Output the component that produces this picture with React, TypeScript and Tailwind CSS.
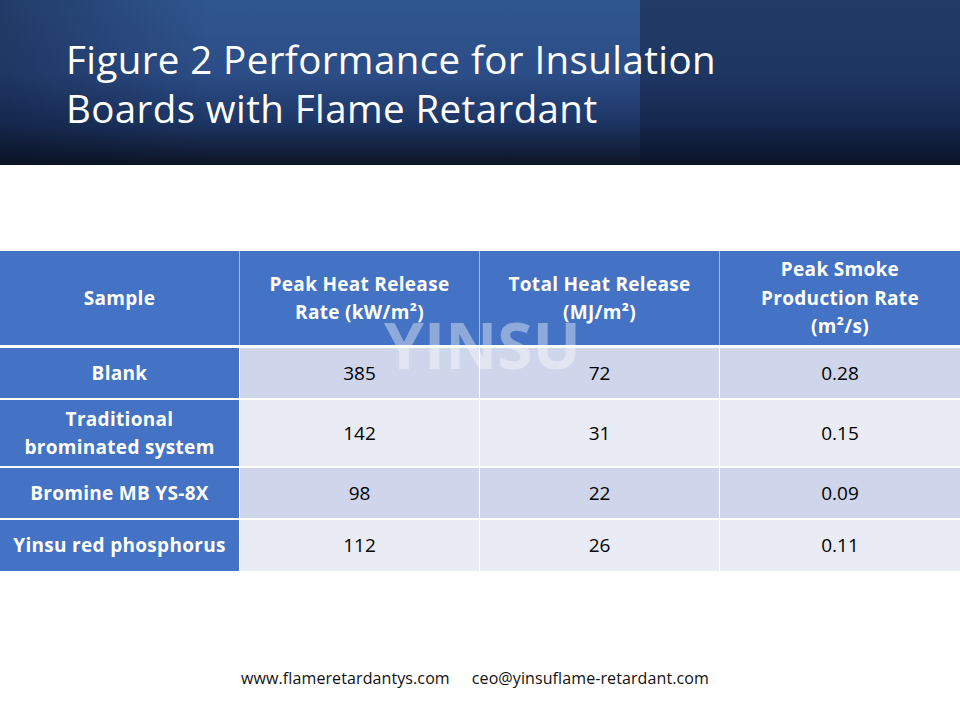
import React from "react";

const font = { fontFamily: "'Open Sans', Lato, 'Liberation Sans', sans-serif" };

type Row = { name: React.ReactNode; a: string; b: string; c: string; h: string; bg: string };

const rows: Row[] = [
  { name: "Blank", a: "385", b: "72", c: "0.28", h: "h-[50px]", bg: "bg-[#cfd5ea]" },
  { name: <>Traditional<br />brominated system</>, a: "142", b: "31", c: "0.15", h: "h-[66px]", bg: "bg-[#e9ebf5]" },
  { name: "Bromine MB YS-8X", a: "98", b: "22", c: "0.09", h: "h-[50px]", bg: "bg-[#cfd5ea]" },
  { name: "Yinsu red phosphorus", a: "112", b: "26", c: "0.11", h: "h-[51px]", bg: "bg-[#e9ebf5]" },
];

export default function App() {
  return (
    <div className="relative w-[960px] h-[720px] bg-white overflow-hidden" style={font}>
      <div className="h-[165px] bg-[linear-gradient(90deg,rgba(0,0,0,0)_640px,rgba(8,16,38,0.38)_640px),linear-gradient(90deg,rgba(5,12,30,0.35)_0%,rgba(0,0,0,0)_22%),linear-gradient(180deg,#30568f_0%,#2c4d87_45%,#1d3563_75%,#0c1527_100%)] pl-[66px] pt-[35px]">
        <h1 className="text-white text-[38.5px] leading-[49px] font-normal tracking-[0.4px]">
          Figure 2 Performance for Insulation
          <br />
          Boards with Flame Retardant
        </h1>
      </div>

      <div className="mt-[86px] flex flex-col bg-white">
        <div className="flex h-[94px] gap-px bg-[#a8bde5]">
          {[
            <>Sample</>,
            <>Peak Heat Release<br />Rate (kW/m²)</>,
            <>Total Heat Release<br />(MJ/m²)</>,
            <>Peak Smoke<br />Production Rate<br />(m²/s)</>,
          ].map((t, i) => (
            <div
              key={i}
              className={`${i === 3 ? "w-[240px]" : "w-[239px]"} bg-[#4472c4] flex items-center justify-center text-center text-white font-bold text-[19px] tracking-[0.3px] leading-[28.5px]`}
            >
              <div>{t}</div>
            </div>
          ))}
        </div>
        <div className="h-[3px]" />
        <div className="flex flex-col gap-[2px]">
          {rows.map((r, i) => (
            <div key={i} className={`flex gap-px ${r.h}`}>
              <div className="w-[239px] bg-[#4472c4] flex items-center justify-center text-center text-white font-bold text-[19px] tracking-[0.3px] leading-[28.5px]">
                <div>{r.name}</div>
              </div>
              {[r.a, r.b, r.c].map((v, j) => (
                <div
                  key={j}
                  className={`${j === 2 ? "w-[240px]" : "w-[239px]"} ${r.bg} flex items-center justify-center text-black text-[19px]`}
                >
                  {v}
                </div>
              ))}
            </div>
          ))}
        </div>
      </div>

      <div className="absolute left-[384px] top-[313px] text-[64px] font-bold leading-none text-white/40 pointer-events-none select-none">
        YINSU
      </div>

      <div className="mt-[95px] flex justify-center gap-[22px] text-[16px] tracking-[0.1px] text-[#111] pr-[10px]">
        <span>www.flameretardantys.com</span>
        <span>ceo@yinsuflame-retardant.com</span>
      </div>
    </div>
  );
}
